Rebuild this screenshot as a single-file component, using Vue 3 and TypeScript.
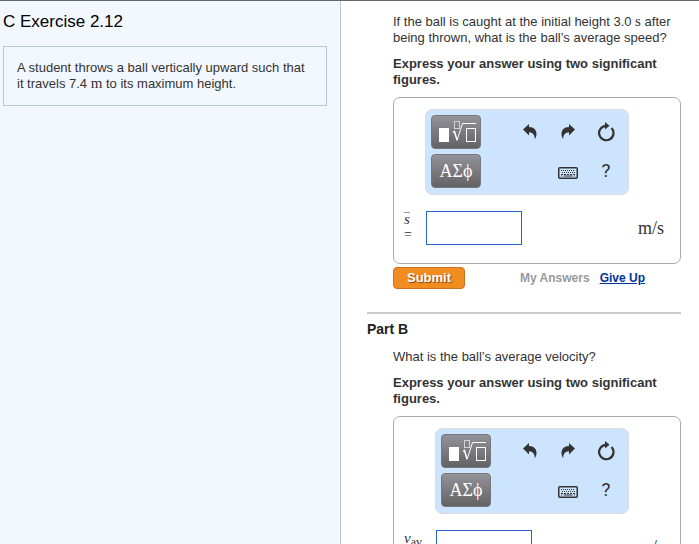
<script setup lang="ts">
interface Part {
  id: string
  title: string
  question: string
  time?: string
  rest?: string
  symbol: string
  subscript?: string
  bar: boolean
  wide: boolean
}

const parts: Part[] = [
  {
    id: 'a',
    title: '',
    question: 'If the ball is caught at the initial height 3.0',
    time: 's',
    rest: 'after being thrown, what is the ball’s average speed?',
    symbol: 's',
    bar: true,
    wide: false,
  },
  {
    id: 'b',
    title: 'Part B',
    question: 'What is the ball’s average velocity?',
    symbol: 'v',
    subscript: 'av',
    bar: false,
    wide: true,
  },
]
</script>

<template>
  <div class="page">
    <aside class="problem">
      <h1>C Exercise 2.12</h1>
      <p class="statement">
        A student throws a ball vertically upward such that it travels 7.4
        <span class="math">m</span> to its maximum height.
      </p>
    </aside>

    <main class="parts">
      <section v-for="part in parts" :key="part.id" class="part">
        <h2 v-if="part.title">{{ part.title }}</h2>
        <div class="body">
          <p class="question">
            {{ part.question }}
            <template v-if="part.time"><span class="math">{{ part.time }}</span> {{ part.rest }}</template>
          </p>
          <p class="instruction">Express your answer using two significant figures.</p>

          <form class="answer" :class="{ wide: part.wide }" @submit.prevent>
            <div class="toolbar">
              <div class="palettes">
                <button type="button" class="palette" aria-label="Templates">
                  <svg width="40" height="24" viewBox="0 0 40 24" fill="none" stroke="#fff">
                    <rect x="3" y="8" width="10" height="14" fill="#fff" stroke="none" />
                    <rect x="18.5" y="1.5" width="5" height="7" stroke="#d4d4d6" />
                    <path d="M17 12.5l1.500-1L21 20" stroke-width="1.500" />
                    <path d="M21 20.500L26.500 3.500H40" />
                    <rect x="30.5" y="8.5" width="9" height="13" />
                  </svg>
                </button>
                <button type="button" class="palette greek" aria-label="Symbols">ΑΣϕ</button>
              </div>
              <div class="actions">
                <button type="button" class="icon" aria-label="Undo">
                  <svg width="14" height="16" viewBox="0 0 14 16" fill="#333">
                    <path d="M0 5.500L6 0v3C11 3 13.500 6 13.500 10c0 2-.6 3.600-1.700 5.200C11.800 10.500 9.500 8.500 6 8.300V11.500z" />
                  </svg>
                </button>
                <button type="button" class="icon" aria-label="Redo">
                  <svg width="14" height="16" viewBox="0 0 14 16" fill="#333">
                    <path d="M14 5.500L8 0v3C3 3 .5 6 .5 10c0 2 .6 3.600 1.700 5.200C2.200 10.500 4.500 8.500 8 8.300V11.500z" />
                  </svg>
                </button>
                <button type="button" class="icon" aria-label="Reset">
                  <svg width="18" height="20" viewBox="0 0 18 20" fill="none">
                    <path d="M14.500 6A7.200 7.200 0 1 1 9 3.800" stroke="#333" stroke-width="2.200" />
                    <path d="M8 0l4.500 3.800L8 7.500z" fill="#333" />
                  </svg>
                </button>
                <button type="button" class="icon keys" aria-label="Keyboard shortcuts">
                  <svg width="20" height="12" viewBox="0 0 20 12" fill="none" stroke="#333">
                    <rect x=".75" y=".75" width="18.500" height="10.500" rx="1" stroke-width="1.500" />
                    <path d="M3 3.500h14M4 5.500h13" stroke-dasharray="1 1" />
                    <path d="M3 7.500h14" stroke-dasharray="2 1" />
                    <path d="M3 9h1M5.500 9h9M16 9h1" />
                  </svg>
                </button>
                <button type="button" class="icon help" aria-label="Help">?</button>
              </div>
            </div>

            <label class="symbol" :for="'answer-' + part.id">
              <span><i :class="{ bar: part.bar }">{{ part.symbol }}</i><sub v-if="part.subscript">{{ part.subscript }}</sub></span>
              <span class="equals">=</span>
            </label>
            <div class="entry">
              <input :id="'answer-' + part.id" type="text" autocomplete="off" />
              <span class="unit">m/s</span>
            </div>
          </form>

          <div class="footer">
            <button type="button" class="submit">Submit</button>
            <div class="links">
              <span class="mine">My Answers</span>
              <a href="#">Give Up</a>
            </div>
          </div>
        </div>
      </section>
    </main>
  </div>
</template>

<style>
body {
  margin: 0;
  overflow: hidden;
}
</style>

<style scoped>
.page {
  box-sizing: border-box;
  display: grid;
  grid-template-columns: 341fr 358fr;
  height: 100vh;
  overflow: hidden;
  border-top: 1px solid #666;
  background: #fff;
  color: #333;
  font: 13px/16px "Liberation Sans", Arial, sans-serif;
}

h1,
h2,
p {
  margin: 0;
}

button {
  padding: 0;
  border: 0;
  background: none;
  color: inherit;
  font: inherit;
}

svg {
  display: block;
}

.math {
  font: 15px/1 "Liberation Serif", "Times New Roman", serif;
}

.problem {
  border-right: 1px solid #b5c9dc;
  background: #f3f8ff;
  padding: 11px 13px 0 3px;
}

h1 {
  color: #000;
  font-size: 17px;
  font-weight: 400;
  line-height: 20px;
}

.statement {
  margin-top: 14px;
  border: 1px solid #b5c9dc;
  padding: 13px;
}

.parts {
  padding: 13px 18px 0 26px;
  min-width: 0;
}

.body {
  padding-left: 26px;
}

.part + .part {
  margin-top: 23px;
  border-top: 2px solid #ccc;
  padding-top: 7px;
}

h2 {
  margin-bottom: 12px;
  color: #222;
  font-size: 14px;
  line-height: 16px;
}

.instruction {
  margin: 10px 0 9px;
  font-weight: 700;
}

.answer {
  display: grid;
  grid-template-columns: 21px 1fr;
  row-gap: 16px;
  border: 1px solid #aaa;
  border-radius: 7px;
  padding: 11px 16px 18px 10px;
}

.answer.wide {
  grid-template-columns: 31px 1fr;
}

.toolbar {
  grid-column: 2;
  box-sizing: border-box;
  display: flex;
  justify-content: space-between;
  height: 86px;
  margin-right: 35px;
  border: 1px solid #ddd;
  border-radius: 7px;
  background: #cde4ff;
  padding: 5px 8px 5px 5px;
}

.palettes {
  display: grid;
  gap: 5px;
  align-content: start;
}

.palette {
  box-sizing: border-box;
  display: grid;
  place-items: center;
  width: 50px;
  height: 34px;
  border: 1px solid #77777c;
  border-radius: 4px;
  background: linear-gradient(#929299, #636365);
  color: #fff;
}

.greek {
  font: 18px/30px "Liberation Serif", "Times New Roman", serif;
}

.actions {
  display: grid;
  grid-template-columns: repeat(3, 28px);
  grid-template-rows: repeat(2, 34px);
  gap: 5px 10px;
}

.icon {
  display: grid;
  place-items: center;
}

.keys {
  grid-column: 2;
  padding-top: 4px;
}

.help {
  font: 19px/34px Roboto, sans-serif;
}

.symbol {
  display: grid;
  align-content: start;
  font: 15px/16px "Liberation Serif", "Times New Roman", serif;
}

.symbol sub {
  font-size: 12px;
  line-height: 1;
  vertical-align: -3px;
}

.bar {
  display: inline-block;
  border-top: 1px solid #999;
  line-height: 13px;
}

.equals {
  font-size: 14px;
}

.entry {
  display: flex;
  align-items: center;
  justify-content: space-between;
  padding-left: 1px;
}

input {
  box-sizing: border-box;
  width: 96px;
  height: 34px;
  border: 1px solid #2b63c9;
  background: #fff;
  padding: 0 6px;
  font: inherit;
}

.unit {
  font: 18px/20px "Liberation Serif", "Times New Roman", serif;
}

.footer {
  display: flex;
  align-items: center;
  justify-content: space-between;
  margin-top: 3px;
  padding-right: 36px;
}

.submit {
  box-sizing: border-box;
  width: 72px;
  height: 22px;
  border: 1px solid #cc7023;
  border-radius: 4px;
  background: #f08c20;
  color: #fff;
  font-weight: 700;
  text-shadow: 1px 1px 1px #8a4a10;
}

.links {
  display: flex;
  gap: 10px;
  font-size: 12px;
  font-weight: 700;
}

.mine {
  color: #999;
}

a {
  color: #039;
}
</style>
